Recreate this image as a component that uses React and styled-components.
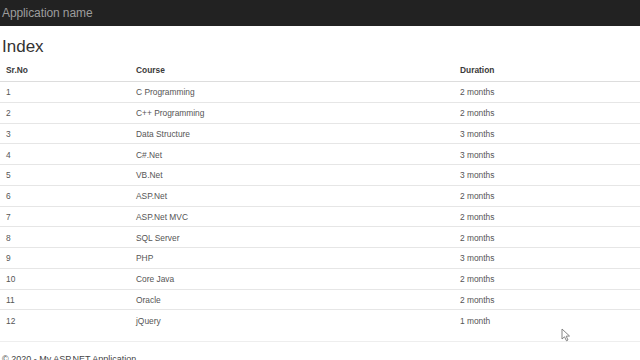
import React from "react";
import styled, { createGlobalStyle } from "styled-components";

const Global = createGlobalStyle`
  html, body { margin: 0; padding: 0; background: #fff; overflow: hidden; }
  body { font-family: "Liberation Sans", Arial, sans-serif; color: #333; }
`;

const Page = styled.div`
  position: relative;
  width: 640px;
  height: 360px;
  overflow: hidden;
`;

const Navbar = styled.div`
  height: 26px;
  background: #222;
  display: flex;
  align-items: center;
  padding-left: 2px;
`;

const Brand = styled.span`
  color: #9d9d9d;
  font-size: 12px;
  letter-spacing: -0.1px;
`;

const Title = styled.h2`
  margin: 0;
  box-sizing: border-box;
  padding: 11px 0 0 2px;
  height: 31px;
  font-size: 17px;
  font-weight: normal;
  line-height: 20px;
  color: #333;
`;

const Table = styled.div`
  display: grid;
  grid-template-columns: 130px 324px 1fr;
  font-size: 8.4px;
`;

const Cell = styled.div`
  height: 20.75px;
  box-sizing: border-box;
  padding-left: 6px;
  padding-top: 1px;
  display: flex;
  align-items: center;
  color: ${(p) => (p.$head ? "#3a3a3a" : "#555")};
  font-weight: ${(p) => (p.$head ? "bold" : "normal")};
  border-bottom: ${(p) => (p.$last ? "none" : p.$head ? "1.5px solid #ddd" : "1px solid #e6e6e6")};
`;

const HeadCell = styled(Cell)`
  height: 25px;
`;

const Rule = styled.hr`
  margin: 10px 0 0;
  border: 0;
  border-top: 1px solid #eee;
`;

const Footer = styled.div`
  font-size: 9px;
  color: #444;
  padding: 12px 0 0 2px;
`;

const Cursor = styled.svg`
  position: absolute;
  left: 561px;
  top: 328px;
`;

const rows = [
  ["1", "C Programming", "2 months"],
  ["2", "C++ Programming", "2 months"],
  ["3", "Data Structure", "3 months"],
  ["4", "C#.Net", "3 months"],
  ["5", "VB.Net", "3 months"],
  ["6", "ASP.Net", "2 months"],
  ["7", "ASP.Net MVC", "2 months"],
  ["8", "SQL Server", "2 months"],
  ["9", "PHP", "3 months"],
  ["10", "Core Java", "2 months"],
  ["11", "Oracle", "2 months"],
  ["12", "jQuery", "1 month"],
];

export default function App() {
  return (
    <Page>
      <Global />
      <Navbar>
        <Brand>Application name</Brand>
      </Navbar>
      <Title>Index</Title>
      <Table>
        <HeadCell $head>Sr.No</HeadCell>
        <HeadCell $head>Course</HeadCell>
        <HeadCell $head>Duration</HeadCell>
        {rows.map((r, i) =>
          r.map((c, j) => (
            <Cell key={`${i}-${j}`} $last={i === rows.length - 1}>
              {c}
            </Cell>
          ))
        )}
      </Table>
      <Rule />
      <Footer>© 2020 - My ASP.NET Application</Footer>
      <Cursor width="10" height="14" viewBox="0 0 10 14">
        <path
          d="M1 1 L1 11 L3.5 8.8 L5.5 12.8 L7 12 L5.2 8.2 L8.5 8 Z"
          fill="#fff"
          stroke="#777"
          strokeWidth="0.9"
          strokeLinejoin="round"
        />
      </Cursor>
    </Page>
  );
}
